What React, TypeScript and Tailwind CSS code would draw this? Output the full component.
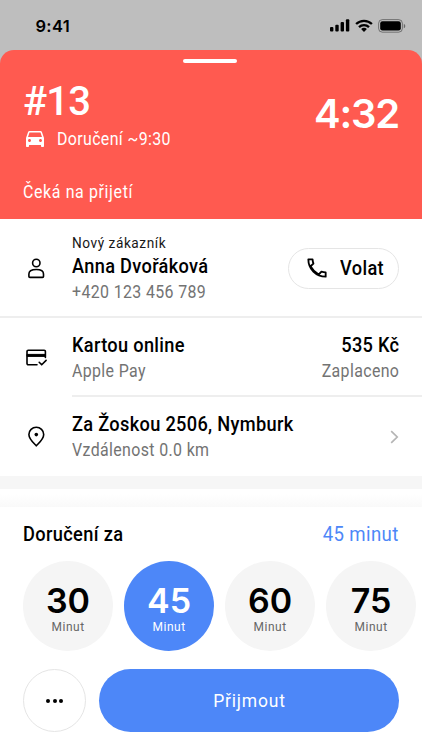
import React from "react";
import { MdDirectionsCar } from "react-icons/md";

type IconProps = React.SVGProps<SVGSVGElement>;

function SignalIcon(props: IconProps) {
  return (
    <svg width="20" height="13" viewBox="0 0 20 13" fill="currentColor" {...props}>
      <rect x="0" y="8" width="3.4" height="4.6" rx="1" />
      <rect x="5.3" y="5.7" width="3.4" height="6.9" rx="1" />
      <rect x="10.6" y="3" width="3.4" height="9.6" rx="1" />
      <rect x="15.9" y="0.2" width="3.4" height="12.4" rx="1" />
    </svg>
  );
}

function WifiIcon(props: IconProps) {
  return (
    <svg width="18" height="13" viewBox="0 0 18 13" fill="none" stroke="currentColor" strokeWidth="2.3" {...props}>
      <path d="M1.1 5a11.4 11.4 0 0 1 15.8 0" />
      <path d="M4 8.1a7.2 7.2 0 0 1 10 0" />
      <path d="M6.1 10.1a4.2 4.2 0 0 1 5.8 0L9 12.9Z" fill="currentColor" stroke="none" />
    </svg>
  );
}

function BatteryIcon(props: IconProps) {
  return (
    <svg width="28" height="14" viewBox="0 0 28 14" fill="none" {...props}>
      <rect x="0.6" y="0.6" width="23.8" height="12.6" rx="3.8" stroke="#000" strokeOpacity="0.4" />
      <rect x="2.2" y="2.2" width="20.6" height="9.4" rx="2.3" fill="#000" />
      <path d="M25.8 4.7v4.6a2.5 2.5 0 0 0 0-4.6Z" fill="#000" fillOpacity="0.45" />
    </svg>
  );
}

function PersonIcon(props: IconProps) {
  return (
    <svg width="24" height="24" viewBox="0 0 24 24" fill="none" stroke="currentColor" strokeWidth="1.6" {...props}>
      <circle cx="12.3" cy="6" r="3.7" />
      <path d="M4.9 17C4.9 14 8.3 12.5 12.3 12.5s7.2 1.5 7.2 4.5V19.4a1 1 0 0 1-1 1H5.9a1 1 0 0 1-1-1Z" strokeLinejoin="round" />
    </svg>
  );
}

function PhoneIcon(props: IconProps) {
  return (
    <svg width="26" height="26" viewBox="0 0 24 24" fill="none" stroke="currentColor" strokeWidth="1.7" strokeLinejoin="round" {...props}>
      <path d="M4 4h3.9c.1 1.5.4 2.7.8 3.9L6 10.4c1.7 3.2 4.4 5.9 7.6 7.6l2.5-2.7c1.2.4 2.4.7 3.9.8V20C11 20 4 13 4 4Z" />
    </svg>
  );
}

function CardIcon(props: IconProps) {
  return (
    <svg width="24" height="24" viewBox="0 0 24 24" fill="none" stroke="currentColor" strokeWidth="1.6" {...props}>
      <path d="M13 18.8H4.2a1.2 1.2 0 0 1-1.2-1.2V5.5a1.2 1.2 0 0 1 1.2-1.2h16a1.2 1.2 0 0 1 1.2 1.2v6" strokeLinecap="round" />
      <path d="M3 8.4h18.4v2H3Z" fill="currentColor" strokeWidth="1" />
      <path d="m15.2 16.3 2.5 2.5 4.4-4.4" strokeLinecap="round" strokeLinejoin="round" />
    </svg>
  );
}

function PinIcon(props: IconProps) {
  return (
    <svg width="24" height="24" viewBox="0 0 24 24" fill="none" stroke="currentColor" strokeWidth="1.6" {...props}>
      <path d="M12.3 20.8c-1.3-1.6-7.4-6.5-7.4-11.4a7.4 7.2 0 0 1 14.8 0c0 4.9-6.1 9.8-7.4 11.4Z" strokeLinejoin="round" />
      <circle cx="12.3" cy="9.6" r="1.8" fill="currentColor" stroke="none" />
    </svg>
  );
}

function StatusBar() {
  return (
    <div className="flex h-[50px] items-start justify-between pl-[35.5px] pr-[16px] text-black">
      <span className="mt-4 font-['Inter'] text-[16.5px] font-semibold leading-5 tracking-[0.3px]">9:41</span>
      <div className="mt-[19px] flex items-start gap-[5px]">
        <SignalIcon />
        <WifiIcon />
        <BatteryIcon />
      </div>
    </div>
  );
}

function OrderHeader() {
  return (
    <header className="relative h-[168.5px] rounded-t-[14px] bg-[#ff5a50] px-[23px] text-white">
      <div className="absolute left-[183px] top-[8.5px] h-[4.5px] w-[54px] rounded-full bg-white" />
      <div className="flex justify-between pt-[29px]">
        <h1 className="text-[40px] font-medium leading-[46px] tracking-[-0.8px]">#13</h1>
        <div className="mt-[13px] font-['Inter'] text-[40px] font-semibold leading-[44px] tracking-[-1.2px]">4:32</div>
      </div>
      <div className="-mt-[9px] flex h-[22px] items-center gap-[10px]">
        <MdDirectionsCar size={24} />
        <span className="origin-left scale-x-[0.91] pt-px text-[17.5px] leading-[22px] tracking-[0.4px]">
          Doručení ~9:30
        </span>
      </div>
      <div className="mt-[31px] origin-left scale-x-[0.91] text-[17.5px] leading-[24px] tracking-[0.7px]">
        Čeká na přijetí
      </div>
    </header>
  );
}

interface RowProps {
  icon: React.ReactNode;
  title: string;
  subtitle: string;
  overline?: string;
  className?: string;
  children?: React.ReactNode;
}

function InfoRow({ icon, title, subtitle, overline, className = "", children }: RowProps) {
  return (
    <div className={`flex items-center pl-6 pr-[23px] ${className}`}>
      <div className="w-[48px] shrink-0">{icon}</div>
      <div className="flex-1 origin-left scale-x-[0.91] whitespace-nowrap">
        {overline && <div className="text-[15px] leading-5 tracking-[0.6px] text-[#171717]">{overline}</div>}
        <div className="text-[20px] font-medium leading-[27px] tracking-[0.35px]">{title}</div>
        <div className="text-[17.5px] leading-[25px] tracking-[0.4px] text-[#737373]">{subtitle}</div>
      </div>
      {children}
    </div>
  );
}

const durations = [30, 45, 60, 75];
const selected = 45;

export default function App() {
  return (
    <div className="h-[750px] w-[422px] overflow-hidden bg-[#bebebe] font-['Roboto',sans-serif] text-black">
      <StatusBar />
      <OrderHeader />
      <main className="h-[532px] bg-white">
        <InfoRow
          icon={<PersonIcon />}
          overline="Nový zákazník"
          title="Anna Dvořáková"
          subtitle="+420 123 456 789"
          className="h-[99.5px] border-b-2 border-[#eeeeee] pt-[3px]"
        >
          <button className="-mt-px flex h-[41px] w-[111px] items-center gap-[10px] rounded-full border-[1.5px] border-[#e5e5e5] pl-[15px]">
            <PhoneIcon />
            <span className="origin-left scale-x-[0.91] text-[20px] font-medium tracking-[0.4px]">Volat</span>
          </button>
        </InfoRow>
        <InfoRow icon={<CardIcon />} title="Kartou online" subtitle="Apple Pay" className="h-[77px] pt-[2px]">
          <div className="origin-right scale-x-[0.91] text-right">
            <div className="text-[20px] font-medium leading-[27px] tracking-[0.3px]">535 Kč</div>
            <div className="text-[17.5px] leading-[25px] tracking-[0.4px] text-[#737373]">Zaplaceno</div>
          </div>
        </InfoRow>
        <div className="ml-[72px] h-[2px] bg-[#eeeeee]" />
        <InfoRow icon={<PinIcon />} title="Za Žoskou 2506, Nymburk" subtitle="Vzdálenost 0.0 km" className="h-[79px]">
          <svg width="9" height="14" viewBox="0 0 9 14" fill="none" stroke="#b5b5b5" strokeWidth="1.7">
            <path d="m1.2 1.2 6 5.8-6 5.8" />
          </svg>
        </InfoRow>
        <div className="h-[13px] bg-[#f6f6f6]" />
        <div className="h-[18px] bg-linear-to-b from-white from-30% to-[#f9f9f9]" />
        <section className="bg-white">
          <div className="flex justify-between px-[23px] pt-[14px] text-[20px] leading-[27px] tracking-[0.4px]">
            <h2 className="origin-left scale-x-[0.91] font-medium">Doručení za</h2>
            <span className="origin-right scale-x-[0.93] text-[#4d87f8]">45 minut</span>
          </div>
          <div className="mt-[13px] flex gap-[11px] pl-[23px]">
            {durations.map((minutes) => (
              <button
                key={minutes}
                className={`flex size-[90px] shrink-0 flex-col items-center rounded-full pt-[23px] ${
                  minutes === selected ? "bg-[#4d87f8] text-white" : "bg-[#f5f5f5] text-black"
                }`}
              >
                <span className="font-['Inter'] text-[34px] font-semibold leading-[34px]">{minutes}</span>
                <span
                  className={`mt-px scale-x-[0.92] text-[13px] leading-4 tracking-[0.6px] ${
                    minutes === selected ? "text-white" : "text-[#666666]"
                  }`}
                >
                  Minut
                </span>
              </button>
            ))}
          </div>
          <div className="mt-[18px] flex gap-[13px] pl-[23px]">
            <button className="flex size-[63px] items-center justify-center gap-[2.5px] rounded-full border-[1.5px] border-[#e5e5e5]">
              <i className="size-[4px] rounded-full bg-black" />
              <i className="size-[4px] rounded-full bg-black" />
              <i className="size-[4px] rounded-full bg-black" />
            </button>
            <button className="h-[63px] w-[300px] rounded-full bg-[#4d87f8] pt-px text-[19px] text-white">
              <span className="inline-block scale-x-[0.92] tracking-[0.9px]">Přijmout</span>
            </button>
          </div>
        </section>
      </main>
    </div>
  );
}
